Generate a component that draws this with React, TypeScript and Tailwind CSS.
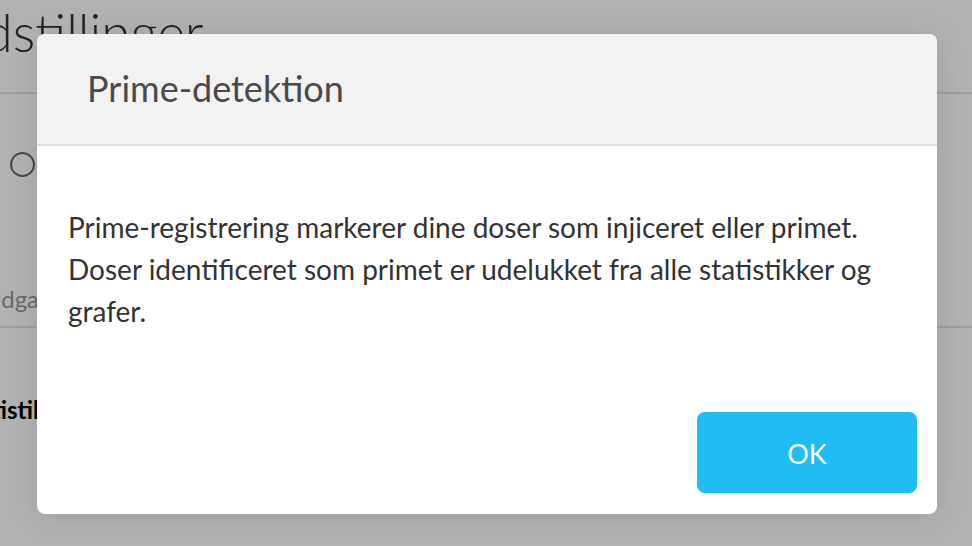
import React from "react";

export default function App() {
  return (
    <div
      className="relative w-[972px] h-[546px] overflow-hidden bg-white"
      style={{ fontFamily: "Lato, 'Noto Sans', sans-serif" }}
    >
      {/* background page */}
      <div className="flex flex-col ml-[-62px]">
        <div className="h-[94px] border-b-2 border-[#e4e4e4] flex items-start pt-[2px]">
          <h1 className="text-[53px] font-light text-[#333] leading-[60px] pl-[3px]">Indstillinger</h1>
        </div>
        <div className="h-[140px] flex items-start pt-[58px] pl-[72px]">
          <span className="block w-[25px] h-[25px] rounded-full border-2 border-[#6a6a6a]" />
        </div>
        <div className="h-[94px] border-b-2 border-[#e4e4e4] flex items-start pt-[50px] pl-[46px]">
          <span className="text-[24px] text-[#999] leading-[30px]">Udgangspunkt</span>
        </div>
        <div className="pt-[67px] pl-[20px]">
          <span className="text-[24px] font-bold text-black leading-[30px]">Statistik</span>
        </div>
      </div>

      {/* overlay */}
      <div className="absolute inset-0 bg-black/30 pl-[37px] pt-[34px]">
        <div className="w-[900px] h-[480px] bg-white rounded-[8px] overflow-hidden flex flex-col shadow-[0_4px_30px_rgba(0,0,0,0.1)]">
          <div className="h-[112px] bg-[#f2f2f2] border-b-2 border-[#e0e0e0] flex items-center pl-[50px] pb-[2px]">
            <h2 className="text-[36px] text-[#4a4a4a] leading-none">Prime-detektion</h2>
          </div>
          <div className="flex-1 flex flex-col pl-[31px] pr-[31px] pb-[21px] pt-[60px]">
            <p className="text-[28px] text-[#333] leading-[42px]">
              Prime-registrering markerer dine doser som injiceret eller primet. Doser identificeret som primet er udelukket fra alle statistikker og grafer.
            </p>
            <div className="mt-auto flex justify-end mr-[-11px]">
              <button className="w-[220px] h-[81px] rounded-[8px] bg-[#20bcf4] text-white text-[27px] pt-[3px]">
                OK
              </button>
            </div>
          </div>
        </div>
      </div>
    </div>
  );
}
